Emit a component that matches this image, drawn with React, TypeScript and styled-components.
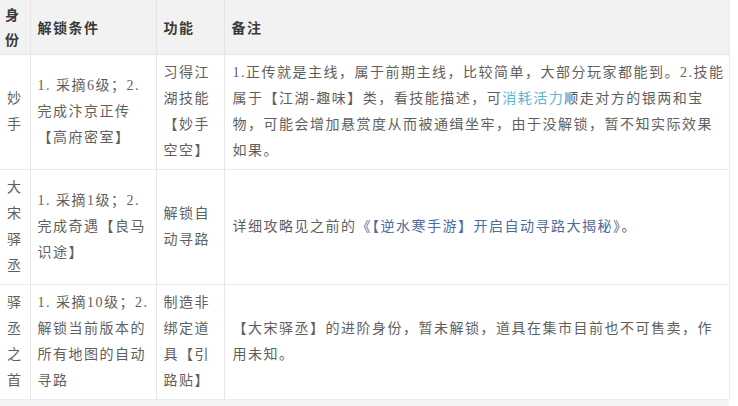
import styled, { createGlobalStyle } from 'styled-components'

const GlobalStyle = createGlobalStyle`
   html, body {
      margin: 0;
      padding: 0;
      background: #ffffff;
   }
   body {
      font-family: "Liberation Serif", "Noto Sans CJK SC", serif;
   }
`

type Part = { text: string, tone?: 'accent' | 'link' }

type RowData = {
   id: string,
   name: string[],
   condition: string,
   feature: string,
   note: Part[],
}

const rows: RowData[] = [
   {
      id: 'miaoshou',
      name: ['妙', '手'],
      condition: '1. 采摘6级；2. 完成汴京正传【高府密室】',
      feature: '习得江湖技能【妙手空空】',
      note: [
         { text: '1.正传就是主线，属于前期主线，比较简单，大部分玩家都能到。2.技能属于【江湖-趣味】类，看技能描述，可' },
         { text: '消耗活力', tone: 'accent' },
         { text: '顺走对方的银两和宝物，可能会增加悬赏度从而被通缉坐牢，由于没解锁，暂不知实际效果如果。' },
      ],
   },
   {
      id: 'yicheng',
      name: ['大', '宋', '驿', '丞'],
      condition: '1. 采摘1级；2. 完成奇遇【良马识途】',
      feature: '解锁自动寻路',
      note: [
         { text: '详细攻略见之前的' },
         { text: '《【逆水寒手游】开启自动寻路大揭秘》', tone: 'link' },
         { text: '。' },
      ],
   },
   {
      id: 'yichengzhishou',
      name: ['驿', '丞', '之', '首'],
      condition: '1. 采摘10级；2. 解锁当前版本的所有地图的自动寻路',
      feature: '制造非绑定道具【引路贴】',
      note: [
         { text: '【大宋驿丞】的进阶身份，暂未解锁，道具在集市目前也不可售卖，作用未知。' },
      ],
   },
]

const Page = styled.div`
   width: 729px;
   display: flex;
   flex-direction: column;
`

const Table = styled.table`
   width: 729px;
   table-layout: fixed;
   border-collapse: collapse;
   border-right: 1px solid #ececec;
   font-size: 14px;
   letter-spacing: 1.5px;
`

const HeadCell = styled.th`
   background: #f2f2f2;
   color: #3a3a3a;
   font-family: "Noto Sans CJK SC", sans-serif;
   font-weight: bold;
   text-align: left;
   line-height: 25px;
   padding: 2px 5px 2px 7px;
   border-left: 1px solid #e6e6e6;
   border-bottom: 1px solid #e6e6e6;
   vertical-align: middle;

   &:first-child {
      border-left: none;
      padding-left: 5px;
   }
`

const Cell = styled.td`
   color: #5f5f5f;
   line-height: 26px;
   padding: 5px 5px 5px 7px;
   border-left: 1px solid #e6e6e6;
   border-bottom: 1px solid #ececec;
   vertical-align: middle;
   word-break: break-all;

   &:first-child {
      border-left: none;
      padding-left: 7px;
      padding-right: 4px;
   }
`

const NoteCell = styled(Cell)`
   padding-left: 8px;
   padding-right: 2px;
`

const Accent = styled.span<{ tone?: 'accent' | 'link' }>`
   color: ${props => props.tone === 'accent' ? '#5cb6d8' : props.tone === 'link' ? '#4d6b9c' : 'inherit'};
`

const Footer = styled.div`
   height: 8px;
   background: #f4f4f4;
`

export default function App() {
   return (
      <>
         <GlobalStyle />
         <Page>
            <Table>
               <colgroup>
                  <col style={{ width: 30 }} />
                  <col style={{ width: 126 }} />
                  <col style={{ width: 68 }} />
                  <col style={{ width: 505 }} />
               </colgroup>
               <thead>
                  <tr>
                     <HeadCell>身份</HeadCell>
                     <HeadCell>解锁条件</HeadCell>
                     <HeadCell>功能</HeadCell>
                     <HeadCell>备注</HeadCell>
                  </tr>
               </thead>
               <tbody>
                  {
                     rows.map(row => (
                        <tr key={row.id}>
                           <Cell>{row.name.join('')}</Cell>
                           <Cell>{row.condition}</Cell>
                           <Cell>{row.feature}</Cell>
                           <NoteCell>
                              {
                                 row.note.map((part, i) => (
                                    <Accent key={i} tone={part.tone}>{part.text}</Accent>
                                 ))
                              }
                           </NoteCell>
                        </tr>
                     ))
                  }
               </tbody>
            </Table>
            <Footer />
         </Page>
      </>
   )
}
